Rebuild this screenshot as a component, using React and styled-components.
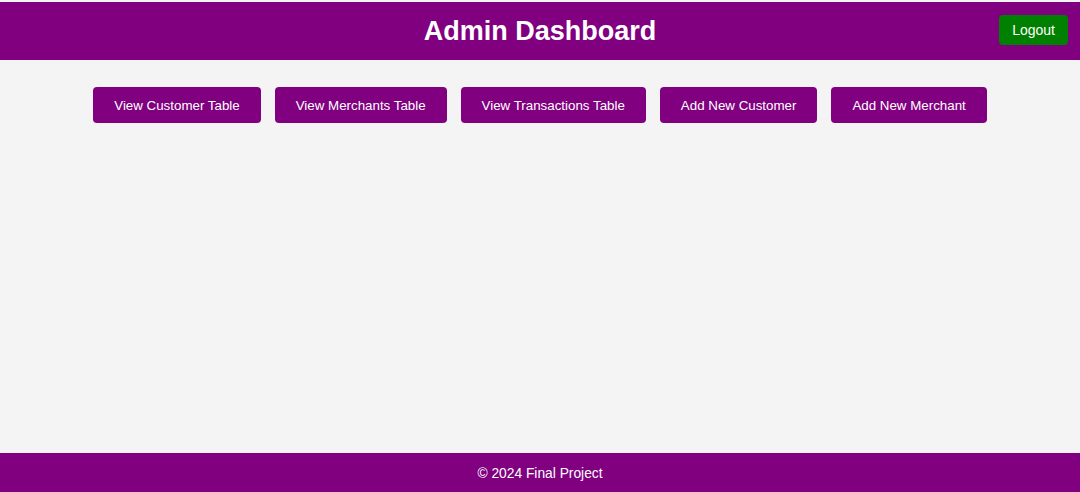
import React from "react";
import styled, { createGlobalStyle } from "styled-components";

const GlobalStyle = createGlobalStyle`
  * { box-sizing: border-box; }
  body {
    margin: 0;
    background: #f4f4f4;
    font-family: "Liberation Sans", Arial, sans-serif;
  }
`;

const Page = styled.div`
  min-height: 100vh;
  display: flex;
  flex-direction: column;
  padding-top: 2px;
`;

const Header = styled.header`
  position: relative;
  height: 58px;
  background: #800080;
  display: flex;
  align-items: center;
  justify-content: center;
`;

const Title = styled.h1`
  margin: 0;
  color: #fff;
  font-size: 27px;
  font-weight: 700;
`;

const LogoutButton = styled.button`
  position: absolute;
  right: 12px;
  top: 13px;
  height: 30px;
  padding: 0 13px;
  border: none;
  border-radius: 4px;
  background: #008000;
  color: #fff;
  font-family: inherit;
  font-size: 14px;
`;

const Main = styled.main`
  flex: 1;
  padding-top: 27px;
`;

const ButtonRow = styled.div`
  display: flex;
  justify-content: center;
  gap: 14px;
`;

const NavButton = styled.button`
  height: 36px;
  padding: 0 21px;
  border: none;
  border-radius: 4px;
  background: #800080;
  color: #fff;
  font-family: inherit;
  font-size: 13.333px;
`;

const Footer = styled.footer`
  height: 39px;
  padding-top: 2px;
  background: #800080;
  color: #fff;
  font-size: 13.8px;
  display: flex;
  align-items: center;
  justify-content: center;
`;

const actions = [
  "View Customer Table",
  "View Merchants Table",
  "View Transactions Table",
  "Add New Customer",
  "Add New Merchant",
];

function App() {
  return (
    <Page>
      <GlobalStyle />
      <Header>
        <Title>Admin Dashboard</Title>
        <LogoutButton>Logout</LogoutButton>
      </Header>
      <Main>
        <ButtonRow>
          {actions.map((a) => (
            <NavButton key={a}>{a}</NavButton>
          ))}
        </ButtonRow>
      </Main>
      <Footer>© 2024 Final Project</Footer>
    </Page>
  );
}

export default App;
